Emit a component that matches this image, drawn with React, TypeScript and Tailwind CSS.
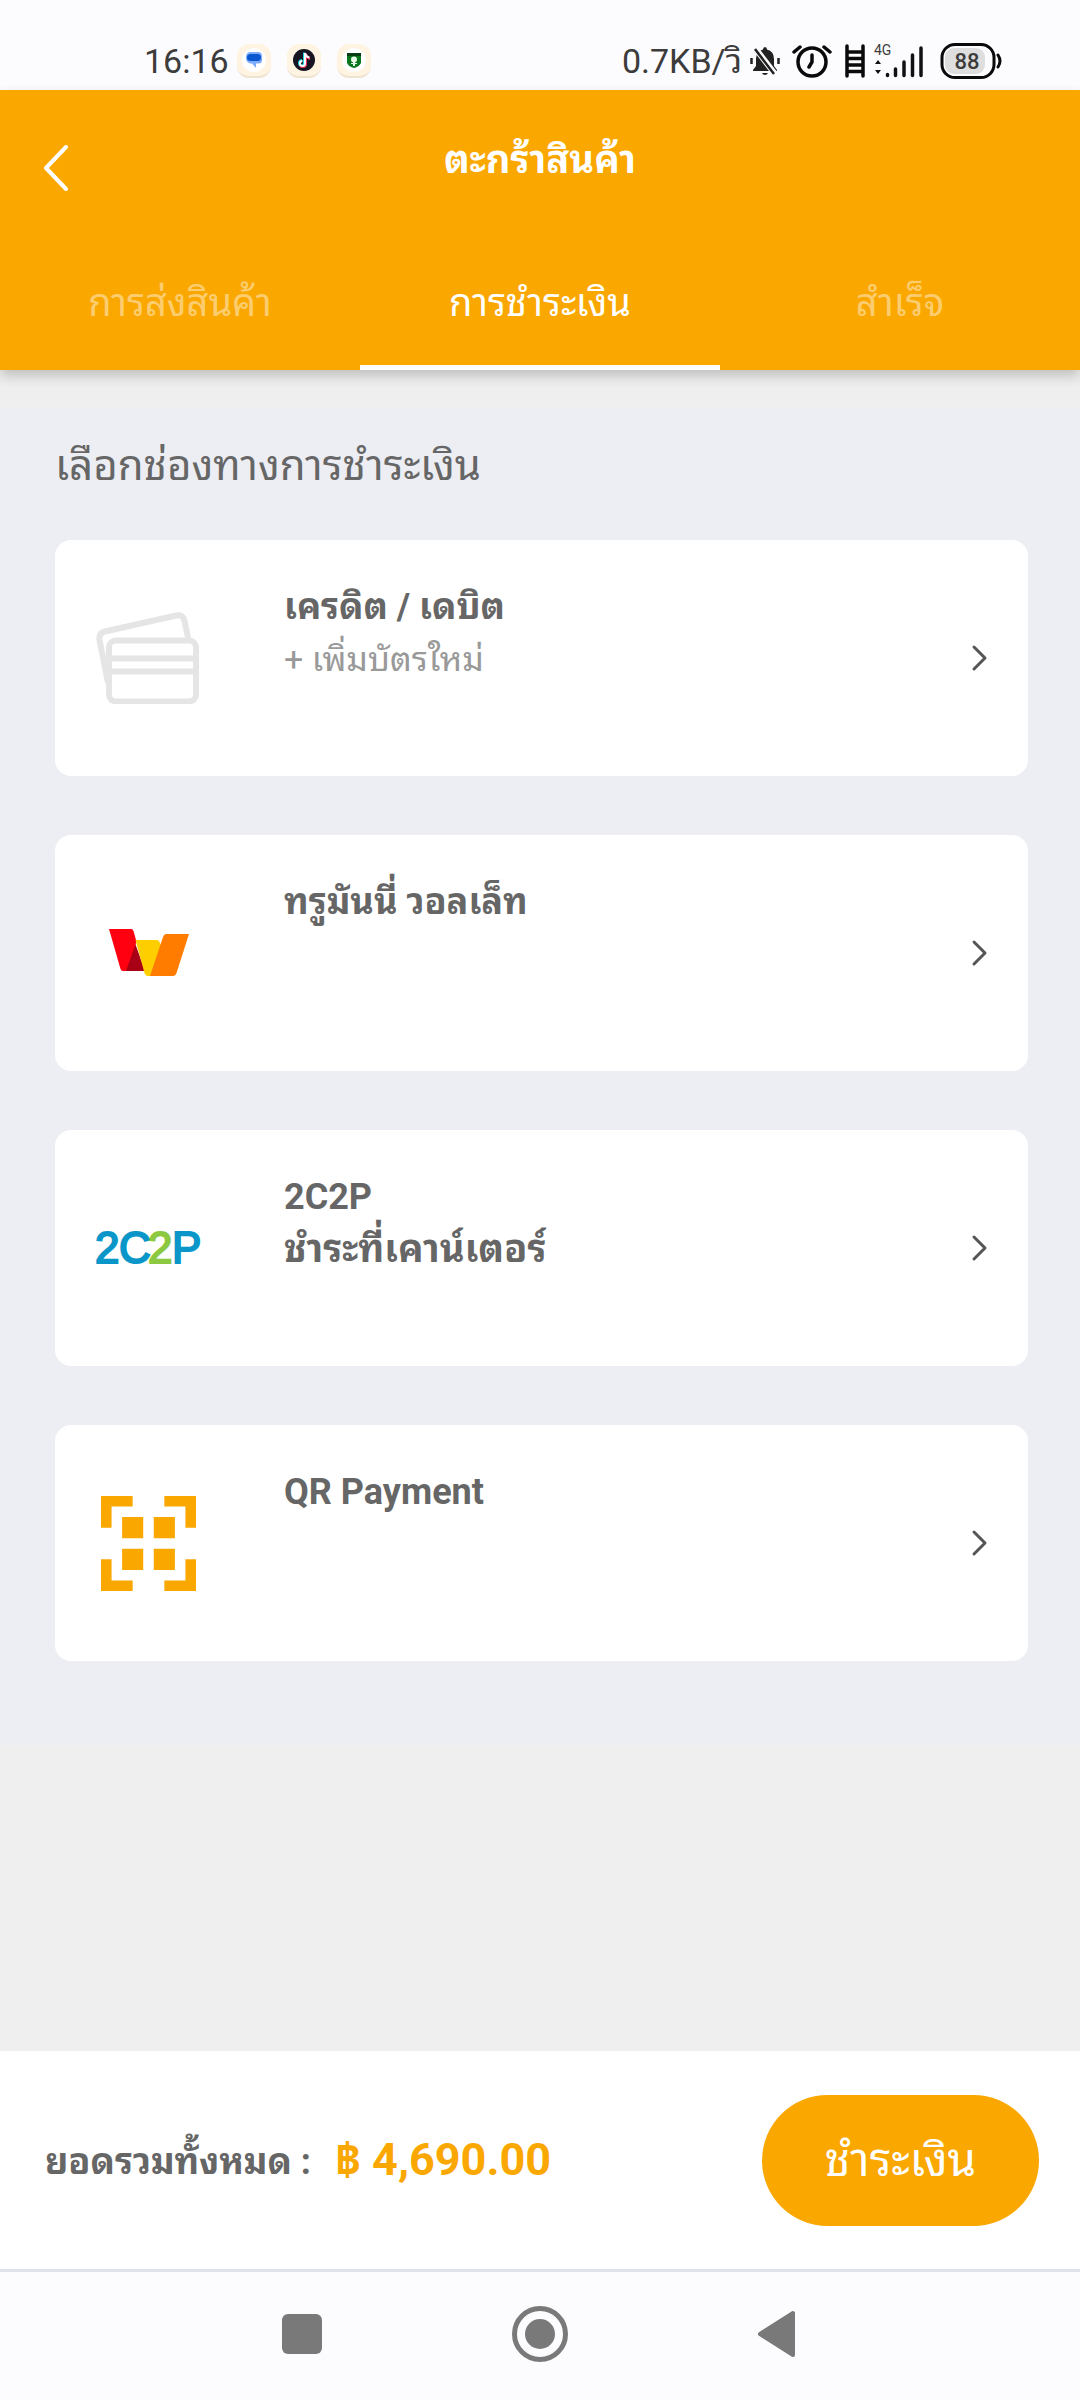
import type { ReactNode } from "react";

type Method = { title: string; second?: string; note?: string; icon: ReactNode };

const methods: Method[] = [
  { title: "เครดิต / เดบิต", note: "+ เพิ่มบัตรใหม่", icon: <CardsIcon /> },
  { title: "ทรูมันนี่ วอลเล็ท", icon: <WalletIcon /> },
  { title: "2C2P", second: "ชำระที่เคาน์เตอร์", icon: <CounterIcon /> },
  { title: "QR Payment", icon: <QrIcon /> },
];

const tabs = ["การส่งสินค้า", "การชำระเงิน", "สำเร็จ"];

function CardsIcon() {
  return (
    <svg viewBox="0 0 104 92" className="h-[92px] w-[104px]" fill="none" stroke="#e5e5e5" strokeWidth="6" aria-hidden="true">
      <path d="M12 71 L3.5 28 Q2.500 21 9 19.500 L80 3.500 Q87 2 88.500 9 L92.500 28" />
      <rect x="13" y="28.500" width="87" height="61" rx="7" />
      <path d="M13 46.500H100M13 59.500H100" />
    </svg>
  );
}

function WalletIcon() {
  return (
    <svg viewBox="-1 0 80 48" className="h-[48px] w-[80px] overflow-visible" aria-hidden="true">
      <path fill="#a80014" d="M26 14 L36 42 H16Z" />
      <path fill="#ff0010" d="M0 0 H22 Q24 0 24.500 2 L27 11 V14 L17 42 H14 Q12 42 11.500 40Z" />
      <path fill="#ffce00" d="M26.500 11 H48 Q50 11 50.500 13 L52 16 L43 47 H39 Q36.500 47 35.500 44Z" />
      <path fill="#ff7c00" d="M57 5 H80 L67.500 44 Q66.500 47 64 47 H41 L54 8 Q55 5 57 5Z" />
    </svg>
  );
}

function CounterIcon() {
  return (
    <svg viewBox="-1 -12 108 60" className="h-[60px] w-[108px] overflow-visible" aria-label="2C2P" role="img"
      fontFamily="'Liberation Sans', Arial, sans-serif" fontSize="44" strokeWidth="2">
      <text y="33" fill="#0a96c8" stroke="#0a96c8">
        <tspan x="0">2</tspan><tspan x="24">C</tspan><tspan x="77">P</tspan>
      </text>
      <text x="53" y="33" fill="#8cc840" stroke="#8cc840">2</text>
    </svg>
  );
}

function QrIcon() {
  return (
    <svg viewBox="0 0 9 9" className="size-[95px]" fill="#faa700" aria-hidden="true">
      <path d="M0 0H3V1H1V3H0ZM6 0H9V3H8V1H6ZM0 6H1V8H3V9H0ZM8 6H9V9H6V8H8ZM2 2H4V4H2ZM5 2H7V4H5ZM2 5H4V7H2ZM5 5H7V7H5Z" />
    </svg>
  );
}

function AppBadge({ children }: { children: ReactNode }) {
  return (
    <span className="flex size-[34px] items-center justify-center rounded-xl border-b-2 border-[#efe3d0] bg-[#fff3e2]">
      <svg viewBox="0 0 24 24" className="size-6" aria-hidden="true">{children}</svg>
    </span>
  );
}

function StatusBar() {
  return (
    <div className="flex h-[90px] items-center bg-[#fcfcff] pt-8 pr-[78px] pl-[144px] text-[34px] leading-9 text-[#3c3c3c]">
      <span>16:16</span>
      <div className="ml-2 flex gap-4">
        <AppBadge>
          <circle cx="12" cy="12" r="12" fill="#fff" />
          <path d="M8 4H16Q20 4 20 8V12Q20 15.500 16.500 15.500H14V20L10 15.500H8Q4 14 4 10Q4 4 8 4Z" fill="#7cabfa" />
          <rect x="5" y="6" width="14" height="7" rx="3.500" fill="#0b57d0" />
        </AppBadge>
        <AppBadge>
          <circle cx="12" cy="12" r="11" fill="#161622" />
          <path d="M12 4.500V14.500Q12 17.500 9.500 17.500Q7 17.500 7 15Q7 12.500 10 12" fill="none" stroke="#25d5e0" strokeWidth="2" />
          <path d="M14 5.500V16Q14 19 11 19Q9 19 8 18M14 6Q15 10 18 11" fill="none" stroke="#ee3155" strokeWidth="2" />
          <path d="M13 5V15.500Q13 18 10.500 18Q8 18 8 15.500Q8 13 10.500 13M13 5Q14 9 17.500 9.500" fill="none" stroke="#fff" strokeWidth="2" />
        </AppBadge>
        <AppBadge>
          <circle cx="12" cy="12" r="12" fill="#fff" />
          <path d="M5 5H19V15Q17 19 12 20Q7 19 5 15Z" fill="#08751f" />
          <path d="M5 5H19V8H5Z" fill="#063d12" />
          <circle cx="12" cy="11.500" r="3" fill="#e8fbe8" />
          <path d="M11 13H13V18H11ZM9 15H15V16H9Z" fill="#e8fbe8" />
        </AppBadge>
      </div>
      <span className="ml-auto">0.7KB/วิ</span>
      <svg viewBox="0 0 30 30" className="ml-2 size-[30px]" aria-hidden="true">
        <path d="M15 1Q17 1 17 3.500Q24 5 24 13V20L27 24V25H3V24L6 20V13Q6 5 13 3.500Q13 1 15 1Z" fill="#222" />
        <path d="M12 27H18Q17 29 15 29Q13 29 12 27Z" fill="#222" />
        <path d="M5 2L25 28" stroke="#fcfcff" strokeWidth="6" />
        <path d="M5 3L24 28M1.500 12V18M28.500 12V18" stroke="#222" strokeWidth="2.500" />
      </svg>
      <svg viewBox="0 0 40 34" className="ml-3 h-[34px] w-10" fill="none" stroke="#0a0a0a" strokeWidth="3.500" strokeLinecap="round" strokeLinejoin="round" aria-hidden="true">
        <circle cx="20" cy="18" r="14" />
        <path d="M20 11V18L17 23M2 8L8 3M38 8L32 3" />
      </svg>
      <svg viewBox="0 0 22 34" className="ml-3 h-[34px] w-[22px]" fill="none" stroke="#0a0a0a" strokeWidth="3.500" strokeLinecap="round" aria-hidden="true">
        <path d="M3 2V32M19 2V32M3 8H19M3 14.500H19M3 21H19M3 27.500H19" />
      </svg>
      <svg viewBox="0 0 50 36" className="ml-2 h-9 w-[50px] overflow-visible" aria-hidden="true">
        <text x="0" y="12" fontSize="14" fill="#3c3c3c">4G</text>
        <path d="M1 21L4 17L7 21ZM1 27L4 31L7 27Z" fill="#111" />
        <path d="M13.500 31.500V32.500M21.500 26V32.500M30 19V32.500M38.500 12V32.500M47 5V32.500" stroke="#111" strokeWidth="3.500" strokeLinecap="round" />
      </svg>
      <svg viewBox="0 0 62 38" className="ml-4 h-[38px] w-[62px]" aria-hidden="true">
        <rect x="2" y="2.500" width="52" height="33" rx="13" fill="none" stroke="#0a0a0a" strokeWidth="3" />
        <rect x="5" y="6" width="40" height="26" rx="9" fill="#dedede" />
        <text x="27" y="27" fontSize="22" fontWeight="500" textAnchor="middle" fill="#3c3c3c">88</text>
        <path d="M58 13Q62 19 58 25" fill="none" stroke="#0a0a0a" strokeWidth="3" strokeLinecap="round" />
      </svg>
    </div>
  );
}

export default function App() {
  return (
    <div className="flex min-h-screen flex-col bg-[#efefef] font-[Roboto,'Noto_Sans_Thai_Looped','Loma','Noto_Sans',sans-serif] text-[#666]">
      <StatusBar />
      <header className="relative bg-[#faa700] text-white shadow-[0_6px_12px_rgba(0,0,0,0.2)]">
        <div className="grid h-[156px] grid-cols-[112px_1fr_112px] items-center">
          <button type="button" aria-label="ย้อนกลับ" className="flex justify-center">
            <svg viewBox="0 0 24 46" className="h-[46px] w-6" fill="none" stroke="#fff" strokeWidth="4" strokeLinecap="round" strokeLinejoin="round" aria-hidden="true">
              <path d="M22 2L2 23L22 44" />
            </svg>
          </button>
          <h1 className="pb-4 text-center text-[38px] leading-[52px] font-bold">ตะกร้าสินค้า</h1>
        </div>
        <nav className="grid h-[124px] grid-cols-3 text-[38px]">
          {tabs.map((t, i) => (
            <button
              key={t}
              type="button"
              aria-current={i === 1 ? "step" : undefined}
              className={i === 1 ? "border-b-5 border-white pb-1" : "border-b-5 border-transparent pb-1 text-white/45"}
            >
              {t}
            </button>
          ))}
        </nav>
      </header>

      <main className="mt-[38px] bg-[#edeef3] pt-7 pr-[52px] pb-[84px] pl-[55px]">
        <h2 className="text-[42px] leading-[60px]">เลือกช่องทางการชำระเงิน</h2>
        <div className="mt-11 flex flex-col gap-[59px]">
          {methods.map((m) => (
            <button key={m.title} type="button" className="flex h-[236px] items-center rounded-2xl bg-white pr-9 text-left">
              <span className="flex w-[186px] shrink-0 justify-center">{m.icon}</span>
              <span className="flex h-full flex-1 flex-col pt-[41px] pl-[43px] leading-[52px]">
                <span className="text-[36px] font-bold">{m.title}</span>
                {m.second && <span className="text-[38px] font-bold">{m.second}</span>}
                {m.note && <span className="text-[34px] text-[#999]">{m.note}</span>}
              </span>
              <svg viewBox="0 0 24 28" className="h-7 w-6" fill="none" stroke="#555" strokeWidth="3" strokeLinecap="round" strokeLinejoin="round" aria-hidden="true">
                <path d="M6 3L17 14L6 25" />
              </svg>
            </button>
          ))}
        </div>
      </main>

      <footer className="mt-auto">
        <div className="flex h-[218px] items-center bg-white pr-[41px] pl-[45px] font-bold">
          <span className="pt-1 text-[36px]">ยอดรวมทั้งหมด :</span>
          <span className="ml-6 text-[45px] text-[#faa700]">฿ 4,690.00</span>
          <button type="button" className="ml-auto h-[131px] w-[277px] rounded-full bg-[#faa700] text-[46px] font-normal text-white">
            ชำระเงิน
          </button>
        </div>
        <div className="flex h-[131px] items-center justify-center gap-[190px] border-t-3 border-[#dde3e9] bg-[#fcfcff] pb-1">
          <button type="button" aria-label="แอปล่าสุด" className="size-[40px] rounded-md bg-[#797979]" />
          <button type="button" aria-label="หน้าหลัก">
            <svg viewBox="0 0 56 56" className="size-14" aria-hidden="true">
              <circle cx="28" cy="28" r="25.500" fill="none" stroke="#797979" strokeWidth="5" />
              <circle cx="28" cy="28" r="15" fill="#797979" />
            </svg>
          </button>
          <button type="button" aria-label="กลับ">
            <svg viewBox="0 0 40 48" className="h-12 w-10" aria-hidden="true">
              <path d="M35 3V45L2 24Z" fill="#797979" stroke="#797979" strokeWidth="4" strokeLinejoin="round" />
            </svg>
          </button>
        </div>
      </footer>
    </div>
  );
}
